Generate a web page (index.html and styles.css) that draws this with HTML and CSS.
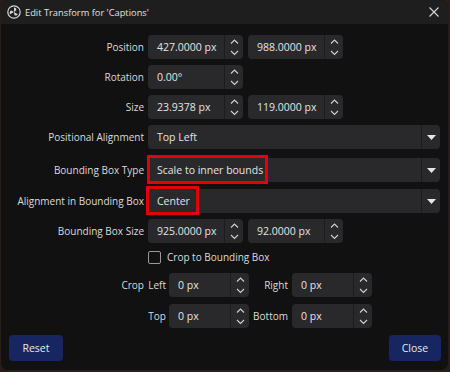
FILE: index.html
```html
<!DOCTYPE html>
<html lang="en">
  <head>
    <meta charset="UTF-8" />
    <title>Edit Transform</title>
    <link rel="stylesheet" href="styles.css">
  </head>
  <body>
    <div class="window">
      <div class="titlebar">
        <svg class="logo" width="14" height="14" viewBox="0 0 14 14">
          <circle cx="7" cy="7" r="6.2" fill="none" stroke="#d6d6d6" stroke-width="1.2" />
          <path d="M7 7 L7 2.6 A2.2 2.2 0 0 1 9.3 5.2 Z" fill="#d6d6d6" />
          <path d="M7 7 L10.8 9.2 A2.2 2.2 0 0 1 7.4 10 Z" fill="#d6d6d6" />
          <path d="M7 7 L3.2 9.2 A2.2 2.2 0 0 1 4.4 5.6 Z" fill="#d6d6d6" />
        </svg>
        <span class="title">Edit Transform for 'Captions'</span>
        <svg class="close-x" width="10" height="10" viewBox="0 0 10 10">
          <path d="M0.5 0.5 L9.5 9.5 M9.5 0.5 L0.5 9.5" stroke="#d8d8d8" stroke-width="1.1" />
        </svg>
      </div>

      <div class="form">
        <div class="row r-first">
          <div class="label">Position</div>
          <div class="controls">
            <div class="spin"><span class="val">427.0000 px</span><span class="arrows"></span></div>
            <div class="spin"><span class="val">988.0000 px</span><span class="arrows"></span></div>
          </div>
        </div>

        <div class="row">
          <div class="label">Rotation</div>
          <div class="controls">
            <div class="spin"><span class="val">0.00°</span><span class="arrows"></span></div>
          </div>
        </div>

        <div class="row">
          <div class="label">Size</div>
          <div class="controls">
            <div class="spin"><span class="val">23.9378 px</span><span class="arrows"></span></div>
            <div class="spin"><span class="val">119.0000 px</span><span class="arrows"></span></div>
          </div>
        </div>

        <div class="row">
          <div class="label">Positional Alignment</div>
          <div class="controls">
            <div class="combo"><span class="val">Top Left</span><span class="drop"></span></div>
          </div>
        </div>

        <div class="row r-type">
          <div class="label">Bounding Box Type</div>
          <div class="controls">
            <div class="combo">
              <span class="val">Scale to inner bounds</span><span class="drop"></span>
              <div class="mark mark-type"></div>
            </div>
          </div>
        </div>

        <div class="row r-align">
          <div class="label">Alignment in Bounding Box</div>
          <div class="controls">
            <div class="combo">
              <span class="val">Center</span><span class="drop"></span>
              <div class="mark mark-align"></div>
            </div>
          </div>
        </div>

        <div class="row">
          <div class="label">Bounding Box Size</div>
          <div class="controls">
            <div class="spin"><span class="val">925.0000 px</span><span class="arrows"></span></div>
            <div class="spin"><span class="val">92.0000 px</span><span class="arrows"></span></div>
          </div>
        </div>

        <div class="row r-check">
          <div class="label"></div>
          <div class="controls">
            <span class="checkbox"></span>
            <span class="check-text">Crop to Bounding Box</span>
          </div>
        </div>

        <div class="row r-crop">
          <div class="label">Crop</div>
          <div class="controls">
            <span class="sub">Left</span>
            <div class="spin small"><span class="val">0 px</span><span class="arrows"></span></div>
            <span class="sub wide">Right</span>
            <div class="spin small"><span class="val">0 px</span><span class="arrows"></span></div>
          </div>
        </div>

        <div class="row r-crop2">
          <div class="label"></div>
          <div class="controls">
            <span class="sub">Top</span>
            <div class="spin small"><span class="val">0 px</span><span class="arrows"></span></div>
            <span class="sub wide">Bottom</span>
            <div class="spin small"><span class="val">0 px</span><span class="arrows"></span></div>
          </div>
        </div>
      </div>

      <div class="buttons">
        <button class="btn reset">Reset</button>
        <button class="btn close">Close</button>
      </div>
    </div>

    <script>
      // spin arrows and combo arrows are the same little svg everywhere
      const up = '<path d="M1 4.5 L4.5 1 L8 4.5" fill="none" stroke="#d0d0d0" stroke-width="1.1" />';
      const down = '<path d="M1 1 L4.5 4.5 L8 1" fill="none" stroke="#d0d0d0" stroke-width="1.1" />';
      document.querySelectorAll(".arrows").forEach((el) => {
        el.innerHTML =
          `<svg width="9" height="6" viewBox="0 0 9 6">${up}</svg>` +
          `<svg width="9" height="6" viewBox="0 0 9 6">${down}</svg>`;
      });
      document.querySelectorAll(".drop").forEach((el) => {
        el.innerHTML =
          '<svg width="9" height="5" viewBox="0 0 9 5"><path d="M0 0 H9 L4.5 5 Z" fill="#e6e6e6" /></svg>';
      });
    </script>
  </body>
</html>
```

FILE: styles.css
```css
body {
  margin: 0;
  background: #2b1c19;
  font-family: "Open Sans", "Noto Sans", sans-serif;
  font-size: 10px;
  color: #dcdcdc;
}

.window {
  width: 447px;
  height: 370px;
  margin-left: 1px;
  background: #111111;
  border-radius: 7px;
  overflow: hidden;
  display: flex;
  flex-direction: column;
}

.titlebar {
  height: 24px;
  background: #1e1e1e;
  display: flex;
  align-items: center;
  padding: 0 9px 0 6px;
}

.logo {
  margin-right: 4px;
}

.title {
  flex: 1;
  font-size: 9.3px;
  color: #e2e2e2;
}

.form {
  display: flex;
  flex-direction: column;
}

.row {
  display: flex;
  align-items: center;
  height: 24px;
  margin-top: 6px;
}

.r-first {
  margin-top: 11px;
}

.r-type {
  margin-top: 9px;
}

.r-align {
  margin-top: 7px;
}

.r-check {
  margin-top: 2px;
}

.r-crop {
  margin-top: 4px;
}

.r-crop2 {
  margin-top: 7px;
}

.label {
  width: 147px;
  flex: none;
  text-align: right;
  padding-right: 4px;
  box-sizing: border-box;
  white-space: nowrap;
}

.controls {
  display: flex;
  align-items: center;
  gap: 5px;
  height: 24px;
}

.spin,
.combo {
  position: relative;
  display: flex;
  align-items: center;
  height: 24px;
  background: #29292c;
  border-radius: 4px;
  color: #e4e4e4;
  font-size: 10.5px;
}

.spin {
  width: 95px;
}

.spin.small {
  width: 80px;
}

.val {
  flex: 1;
  padding-left: 9px;
  white-space: nowrap;
}

.arrows {
  width: 18px;
  height: 24px;
  border-left: 1px solid #1c1c1e;
  display: flex;
  flex-direction: column;
  align-items: center;
  justify-content: center;
  gap: 5px;
}

.arrows svg {
  display: block;
}

.combo {
  width: 292px;
}

.drop {
  width: 18px;
  height: 24px;
  border-left: 1px solid #1c1c1e;
  display: flex;
  align-items: center;
  justify-content: center;
}

.drop svg {
  display: block;
}

.mark {
  position: absolute;
  top: -3px;
  height: 29px;
  border: 3px solid #e3000b;
  box-sizing: border-box;
  pointer-events: none;
}

.mark-type {
  left: -1px;
  width: 121px;
}

.mark-align {
  left: -2px;
  width: 53px;
}

.checkbox {
  width: 11px;
  height: 11px;
  border: 1px solid #9a9a9a;
  border-radius: 2px;
  margin-left: 0;
}

.check-text {
  margin-left: 1px;
}

.r-crop .controls,
.r-crop2 .controls {
  gap: 0;
}

.sub {
  width: 18px;
  text-align: right;
  margin-right: 3px;
}

.sub.wide {
  width: 39px;
  margin-right: 4px;
}

.buttons {
  display: flex;
  justify-content: space-between;
  margin-top: auto;
  padding: 0 7px 9px 8px;
}

.btn {
  height: 26px;
  border: none;
  border-radius: 4px;
  background: #172660;
  color: #e8e8e8;
  font-family: "Open Sans", "Noto Sans", sans-serif;
  font-size: 10.5px;
}

.reset {
  width: 54px;
}

.close {
  width: 52px;
}
```
